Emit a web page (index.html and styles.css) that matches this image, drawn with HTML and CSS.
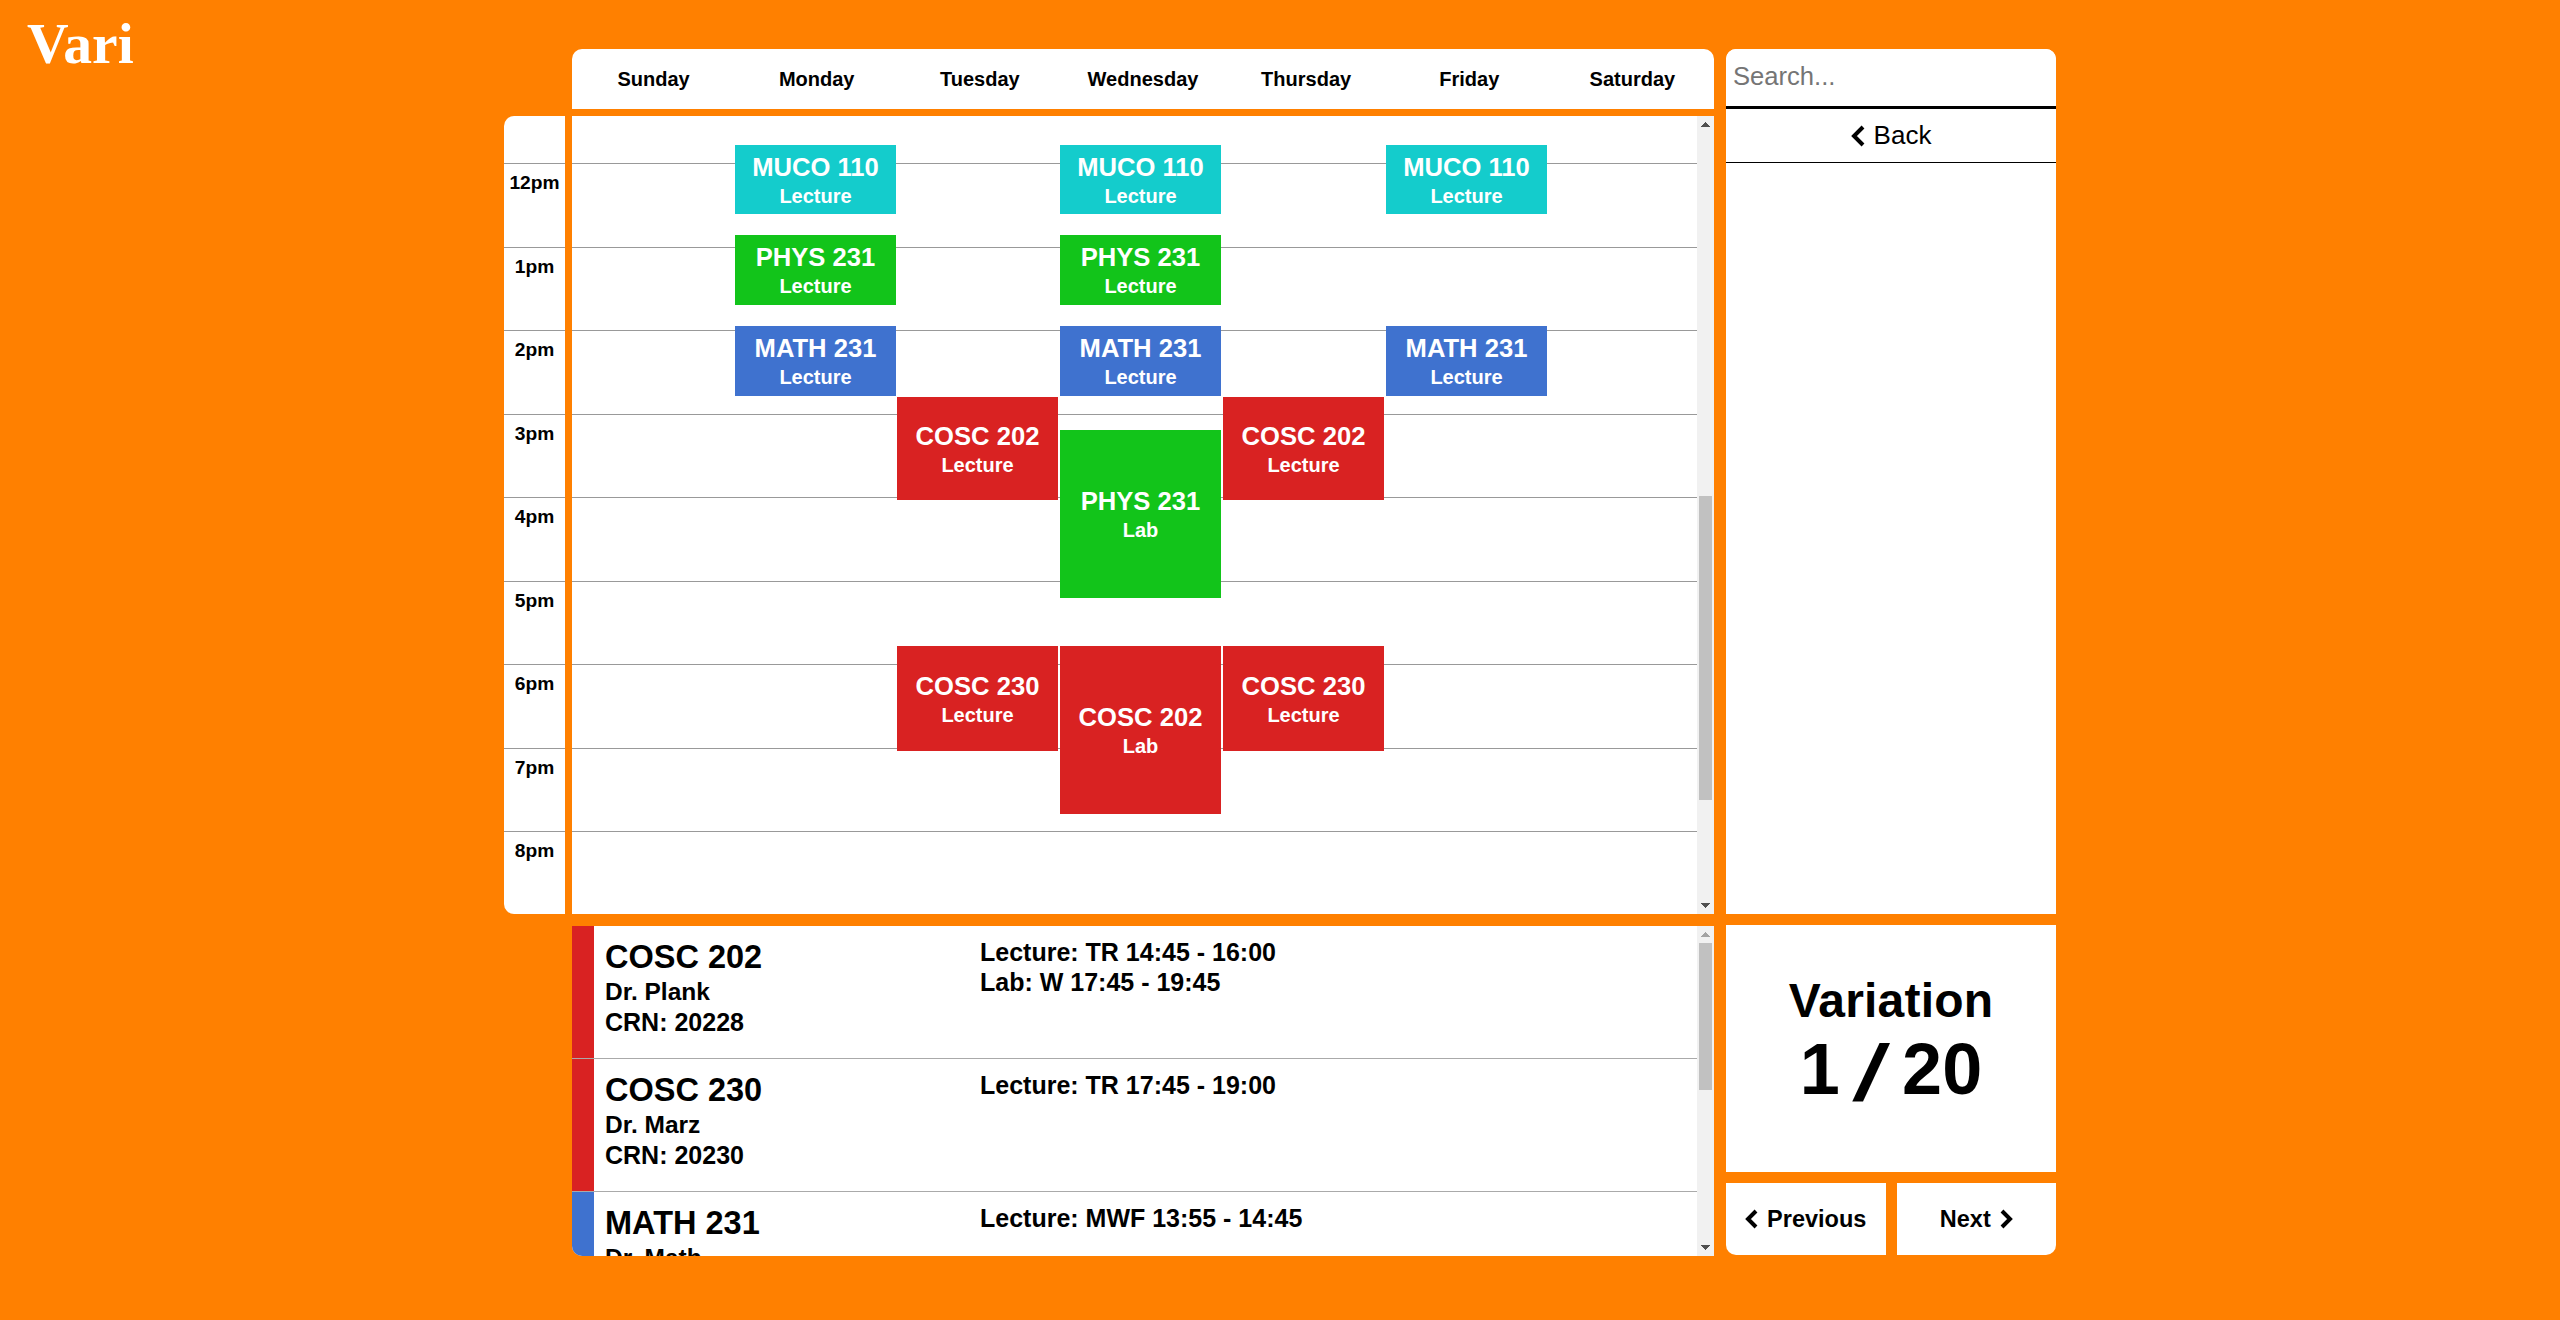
FILE: index.html
```html
<!DOCTYPE html>
<html lang="en">
  <head>
    <meta charset="UTF-8" />
    <meta name="viewport" content="width=device-width, initial-scale=1.0" />
    <title>Vari</title>
    <link rel="stylesheet" href="styles.css">
  </head>
  <body>
    <div class="page">
      <h1 class="brand">Vari</h1>

      <div class="board">
        <!-- Day names -->
        <div class="days">
          <div class="day">Sunday</div>
          <div class="day">Monday</div>
          <div class="day">Tuesday</div>
          <div class="day">Wednesday</div>
          <div class="day">Thursday</div>
          <div class="day">Friday</div>
          <div class="day">Saturday</div>
        </div>

        <!-- Rows and blocks are filled in by script.js -->
        <div class="hours" id="hours"></div>
        <div class="calendar">
          <div class="calendar-inner" id="calendarInner"></div>
          <div class="scrollbar">
            <div class="arrow arrow-up"></div>
            <div class="track"><div class="thumb calendar-thumb"></div></div>
            <div class="arrow arrow-down"></div>
          </div>
        </div>

        <!-- Search side -->
        <aside class="finder">
          <input class="search" type="text" placeholder="Search..." />
          <button class="back" type="button">
            <svg class="chev" width="14" height="22" viewBox="0 0 14 22"><path d="M12 2 3 11l9 9" /></svg>
            Back
          </button>
        </aside>

        <!-- Selected courses -->
        <div class="courses">
          <div class="course-list">
            <div class="course">
              <div class="course-bar red"></div>
              <div class="course-info">
                <div class="course-name">COSC 202</div>
                <div>Dr. Plank</div>
                <div class="course-crn">CRN: 20228</div>
              </div>
              <div class="course-times">
                <div>Lecture: TR 14:45 - 16:00</div>
                <div>Lab: W 17:45 - 19:45</div>
              </div>
            </div>
            <div class="course">
              <div class="course-bar red"></div>
              <div class="course-info">
                <div class="course-name">COSC 230</div>
                <div>Dr. Marz</div>
                <div class="course-crn">CRN: 20230</div>
              </div>
              <div class="course-times">
                <div>Lecture: TR 17:45 - 19:00</div>
              </div>
            </div>
            <div class="course">
              <div class="course-bar blue"></div>
              <div class="course-info">
                <div class="course-name">MATH 231</div>
                <div>Dr. Math</div>
              </div>
              <div class="course-times">
                <div>Lecture: MWF 13:55 - 14:45</div>
              </div>
            </div>
          </div>
          <div class="scrollbar">
            <div class="arrow arrow-up arrow-off"></div>
            <div class="track"><div class="thumb courses-thumb"></div></div>
            <div class="arrow arrow-down"></div>
          </div>
        </div>

        <!-- Variation picker -->
        <div class="picker">
          <div class="variation">
            <div class="variation-label">Variation</div>
            <div class="variation-count">1<span class="slash">/</span>20</div>
          </div>
          <div class="pager">
            <button class="page-btn prev" type="button">
              <svg class="chev" width="13" height="20" viewBox="0 0 13 20"><path d="M11 2 3 10l8 8" /></svg>
              Previous
            </button>
            <button class="page-btn next" type="button">
              Next
              <svg class="chev" width="13" height="20" viewBox="0 0 13 20"><path d="M2 2l8 8-8 8" /></svg>
            </button>
          </div>
        </div>
      </div>
    </div>
    <script src="script.js"></script>
  </body>
</html>
```

FILE: styles.css
```css
* {
  box-sizing: border-box;
}
body {
  margin: 0;
  height: 1320px;
  overflow: hidden;
  background-color: #ff8000;
  font-family: "Liberation Sans", Arial, sans-serif;
  font-weight: bold;
  color: #000;
}
.page {
  display: flex;
  padding-top: 49px;
}
.brand {
  width: 504px;
  margin: -37px 0 0;
  padding-left: 27px;
  font-family: "Liberation Serif", Georgia, serif;
  font-size: 57.6px;
  line-height: 64px;
  color: #fff;
}
.board {
  display: grid;
  grid-template-columns: 61px 7px 1142px 12px 330px;
  grid-template-rows: 60px 7px 798px 12px 330px;
}

/* Day names */
.days {
  grid-column: 3;
  grid-row: 1;
  display: flex;
  align-items: center;
  background-color: #fff;
  border-radius: 10px 10px 0 0;
}
.day {
  flex: 1;
  text-align: center;
  font-size: 20px;
}

/* Hours and calendar */
.hours {
  grid-column: 1;
  grid-row: 3;
  padding-top: 47px;
  overflow: hidden;
  background-color: #fff;
  border-radius: 10px 0 0 10px;
}
.hour {
  height: 83.5px;
  padding-top: 8px;
  border-top: 1px solid #999;
  text-align: center;
  font-size: 19.2px;
  line-height: 22px;
}
.calendar {
  grid-column: 3;
  grid-row: 3;
  display: flex;
  overflow: hidden;
  background-color: #fff;
}
.calendar-inner {
  position: relative;
  flex: 1;
  padding-top: 47px;
}
.line {
  height: 83.5px;
  border-top: 1px solid #999;
}
.event {
  position: absolute;
  width: 161px;
  display: flex;
  flex-direction: column;
  align-items: center;
  justify-content: center;
  padding-top: 2px;
  color: #fff;
  font-size: 20px;
  line-height: 28px;
}
.event-name {
  font-size: 25.6px;
  line-height: 30px;
}
.red {
  background-color: #d92222;
}
.blue {
  background-color: #3f72cf;
}
.cyan {
  background-color: #14cccc;
}
.green {
  background-color: #12c41a;
}

/* Fake window scrollbars */
.scrollbar {
  flex: none;
  display: flex;
  flex-direction: column;
  width: 17px;
  background-color: #f1f1f1;
}
.track {
  flex: 1;
  padding: 0 2px;
}
.thumb {
  background-color: #c1c1c1;
}
.calendar-thumb {
  height: 304px;
  margin-top: 363px;
}
.courses-thumb {
  height: 147px;
}
.arrow {
  flex: none;
  height: 17px;
  background-repeat: no-repeat;
  background-position: center;
  background-size: 9px 5px;
}
.arrow-up {
  background-image: conic-gradient(from 138deg at 50% 0, #505050 84deg, transparent 0);
}
.arrow-down {
  background-image: conic-gradient(from 318deg at 50% 100%, #505050 84deg, transparent 0);
}
.arrow-off {
  background-image: conic-gradient(from 138deg at 50% 0, #a3a3a3 84deg, transparent 0);
}

/* Search side */
.finder {
  grid-column: 5;
  grid-row: 1 / 4;
  background-color: #fff;
  border-radius: 10px 10px 0 0;
}
.search {
  display: block;
  width: 100%;
  height: 60px;
  padding: 0 7px 2px;
  border: none;
  border-bottom: 3px solid #000;
  border-radius: 10px 10px 0 0;
  outline: none;
  font-family: "Liberation Sans", Arial, sans-serif;
  font-size: 25.6px;
}
.back {
  display: flex;
  align-items: center;
  justify-content: center;
  gap: 9px;
  width: 100%;
  height: 54px;
  padding: 0;
  border: none;
  border-bottom: 1px solid #000;
  background: none;
  font-family: "Liberation Sans", Arial, sans-serif;
  font-size: 26px;
  color: #000;
}
.chev {
  flex: none;
}
.chev path {
  fill: none;
  stroke: #000;
  stroke-width: 4;
}

/* Selected courses */
.courses {
  grid-column: 3;
  grid-row: 5;
  display: flex;
  overflow: hidden;
  background-color: #fff;
  border-radius: 0 0 0 10px;
}
.course-list {
  flex: 1;
  overflow: hidden;
}
.course {
  display: flex;
  height: 132.8px;
  border-bottom: 1px solid #aaa;
  font-size: 24.5px;
  line-height: 30px;
}
.course-bar {
  flex: none;
  width: 22px;
}
.course-info {
  width: 386px;
  padding: 11px 0 0 11px;
}
.course-name {
  font-size: 32.5px;
  line-height: 40px;
}
.course-crn {
  font-size: 25px;
}
.course-times {
  padding-top: 11px;
  font-size: 25px;
}

/* Variation picker */
.picker {
  grid-column: 5;
  grid-row: 5;
  display: flex;
  flex-direction: column;
  gap: 11px;
  margin-top: -1px;
}
.variation {
  display: flex;
  flex-direction: column;
  align-items: center;
  justify-content: center;
  height: 247px;
  padding-bottom: 16px;
  background-color: #fff;
}
.variation-label {
  font-size: 48px;
  letter-spacing: 0.2px;
  line-height: 56px;
}
.variation-count {
  font-size: 72px;
  line-height: 80px;
}
.slash {
  display: inline-block;
  margin: 0 20px;
  font-size: 80px;
  font-weight: normal;
  line-height: 60px;
  transform: translateY(7px) scaleX(1.7);
}
.pager {
  display: flex;
  gap: 11px;
}
.page-btn {
  display: flex;
  align-items: center;
  justify-content: center;
  gap: 9px;
  flex: 1;
  height: 72px;
  padding: 0;
  border: none;
  background-color: #fff;
  font-family: "Liberation Sans", Arial, sans-serif;
  font-size: 23.5px;
  font-weight: bold;
  color: #000;
}
.prev {
  border-radius: 0 0 0 10px;
}
.next {
  border-radius: 0 0 10px 0;
}
```

FILE: script.js
```js
const COL = 162.7;

// day is the column, top and bottom are where the block sits on the page
const events = [
  { day: 1, name: "MUCO 110", kind: "Lecture", color: "cyan", top: 145, bottom: 214 },
  { day: 3, name: "MUCO 110", kind: "Lecture", color: "cyan", top: 145, bottom: 214 },
  { day: 5, name: "MUCO 110", kind: "Lecture", color: "cyan", top: 145, bottom: 214 },
  { day: 1, name: "PHYS 231", kind: "Lecture", color: "green", top: 235, bottom: 305 },
  { day: 3, name: "PHYS 231", kind: "Lecture", color: "green", top: 235, bottom: 305 },
  { day: 1, name: "MATH 231", kind: "Lecture", color: "blue", top: 326, bottom: 396 },
  { day: 3, name: "MATH 231", kind: "Lecture", color: "blue", top: 326, bottom: 396 },
  { day: 5, name: "MATH 231", kind: "Lecture", color: "blue", top: 326, bottom: 396 },
  { day: 2, name: "COSC 202", kind: "Lecture", color: "red", top: 397, bottom: 500 },
  { day: 4, name: "COSC 202", kind: "Lecture", color: "red", top: 397, bottom: 500 },
  { day: 3, name: "PHYS 231", kind: "Lab", color: "green", top: 430, bottom: 598 },
  { day: 2, name: "COSC 230", kind: "Lecture", color: "red", top: 646, bottom: 751 },
  { day: 4, name: "COSC 230", kind: "Lecture", color: "red", top: 646, bottom: 751 },
  { day: 3, name: "COSC 202", kind: "Lab", color: "red", top: 646, bottom: 814 },
];

const hours = document.getElementById("hours");
const inner = document.getElementById("calendarInner");

// the visible part of the day, 12pm to 8pm
for (let h = 12; h <= 20; h++) {
  const label = document.createElement("div");
  label.className = "hour";
  label.textContent = (h % 12 || 12) + "pm";
  hours.appendChild(label);

  const line = document.createElement("div");
  line.className = "line";
  inner.appendChild(line);
}

events.forEach((ev) => {
  const block = document.createElement("div");
  block.className = "event " + ev.color;
  block.style.left = Math.round(ev.day * COL) + "px";
  block.style.top = ev.top - 116 + "px";
  block.style.height = ev.bottom - ev.top + "px";
  block.innerHTML = '<div class="event-name">' + ev.name + "</div><div>" + ev.kind + "</div>";
  inner.appendChild(block);
});
```
